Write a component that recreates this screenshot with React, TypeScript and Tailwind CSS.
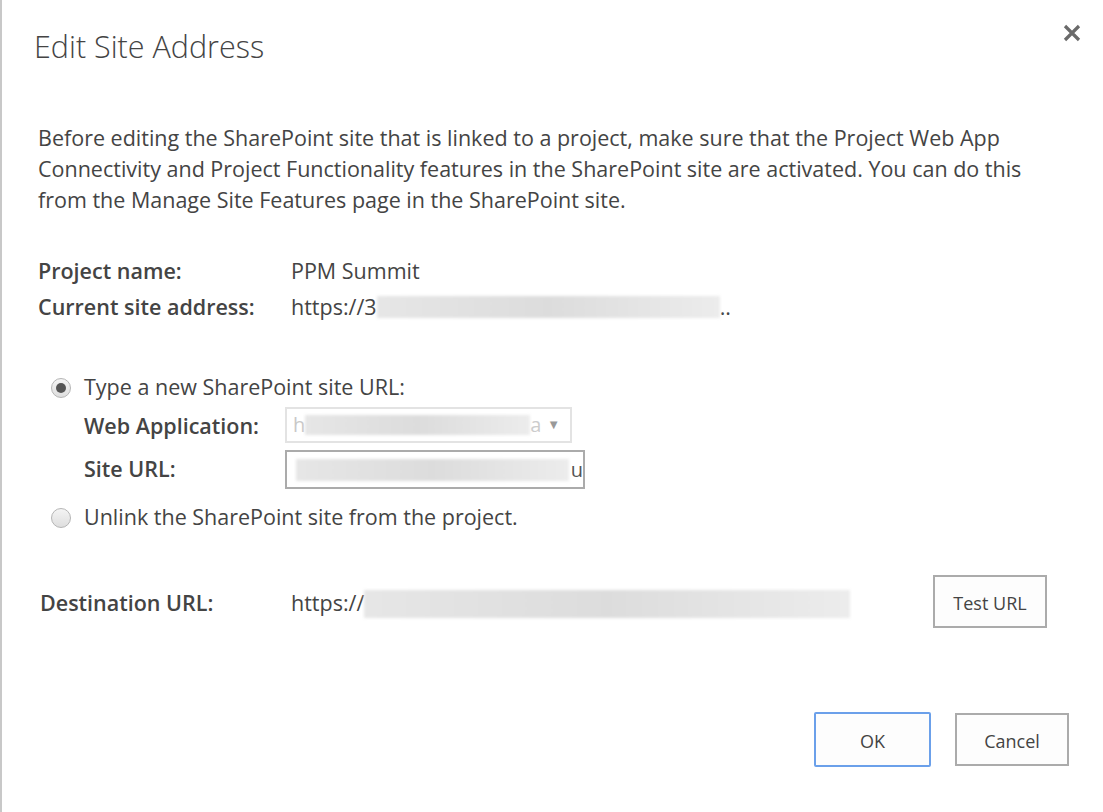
import React from "react";

const font = { fontFamily: '"Open Sans", "Noto Sans", sans-serif' };

function Blur({ w, h = 26, className = "" }: { w: number; h?: number; className?: string }) {
  return (
    <span
      className={"inline-block align-middle bg-gradient-to-r from-[#e6e6e6] via-[#dcdcdc] to-[#ececec] blur-[1.5px] " + className}
      style={{ width: w, height: h }}
    />
  );
}

function Radio({ checked }: { checked?: boolean }) {
  return (
    <span className="flex h-[20px] w-[20px] shrink-0 items-center justify-center rounded-full border border-[#b5b5b5] bg-gradient-to-b from-[#f4f4f4] to-[#dedede]">
      {checked && <span className="h-[10px] w-[10px] rounded-full bg-[#555]" />}
    </span>
  );
}

export default function App() {
  return (
    <div
      className="relative h-[812px] w-[1103px] overflow-hidden border-l-2 border-[#c8c8c8] bg-white pl-[36px] pr-[32px] pt-[26px] text-[#444]"
      style={font}
    >
      <div className="absolute right-[22px] top-[24px] text-[#666]">
        <svg width="18" height="18" viewBox="0 0 18 18">
          <path d="M2 2 L16 16 M16 2 L2 16" stroke="#6a6a6a" strokeWidth="3.2" strokeLinecap="butt" />
        </svg>
      </div>

      <h1 className="-ml-[4px] text-[30.5px] font-light leading-[40px] text-[#444]">Edit Site Address</h1>

      <p className="mt-[56px] whitespace-nowrap text-[21.5px] leading-[31px]">
        Before editing the SharePoint site that is linked to a project, make sure that the Project Web App
        <br />
        Connectivity and Project Functionality features in the SharePoint site are activated. You can do this
        <br />
        from the Manage Site Features page in the SharePoint site.
      </p>

      <div className="mt-[38px] grid grid-cols-[253px_1fr] text-[21.5px] leading-[36px]">
        <div className="font-semibold">Project name:</div>
        <div>PPM Summit</div>
        <div className="whitespace-nowrap font-semibold">Current site address:</div>
        <div className="flex items-center whitespace-nowrap">
          <span>https://3</span>
          <Blur w={343} h={22} />
          <span>..</span>
        </div>
      </div>

      <div className="mt-[47px] pl-[13px] text-[21.5px]">
        <div className="flex h-[31px] items-center gap-[13px]">
          <Radio checked />
          <span>Type a new SharePoint site URL:</span>
        </div>
        <div className="mt-[4px] flex items-center pl-[33px]">
          <div className="w-[201px] pt-[3px] font-semibold">Web Application:</div>
          <div className="flex h-[36px] w-[287px] items-center border-2 border-[#e3e3e3] pl-[6px] text-[20px] text-[#c8c8c8]">
            <span>h</span>
            <Blur w={225} h={20} />
            <span className="text-[#ccc]">a</span>
            <span className="ml-auto mr-[10px] text-[13px] text-[#999]">▼</span>
          </div>
        </div>
        <div className="mt-[7px] flex items-center pl-[33px]">
          <div className="w-[201px] font-semibold">Site URL:</div>
          <div className="flex h-[39px] w-[300px] items-center border-2 border-[#ababab] pl-[9px] text-[20px]">
            <Blur w={274} h={22} />
            <span className="ml-[2px] text-[#555]">u</span>
          </div>
        </div>
        <div className="mt-[13px] flex h-[31px] items-center gap-[13px]">
          <Radio />
          <span>Unlink the SharePoint site from the project.</span>
        </div>
      </div>

      <div className="mt-[42px] flex items-center text-[21.5px]">
        <div className="w-[253px] pl-[2px] pt-[4px] font-semibold">Destination URL:</div>
        <div className="flex items-center pt-[4px]">
          <span>https://</span>
          <Blur w={486} h={28} />
        </div>
        <button className="ml-auto mr-[24px] h-[53px] w-[114px] border-2 border-[#ababab] bg-[#fdfdfd] pt-[4px] text-[18px] text-[#444]">
          Test URL
        </button>
      </div>

      <div className="mt-[84px] flex justify-end gap-[24px] pr-[2px]">
        <button className="h-[55px] w-[117px] rounded-[2px] border-2 border-[#6ba0ea] bg-[#fdfdfd] pt-[4px] text-[18px] text-[#444]">
          OK
        </button>
        <button className="mt-[1px] h-[53px] w-[114px] border-2 border-[#ababab] bg-[#fdfdfd] pt-[4px] text-[18px] text-[#444]">
          Cancel
        </button>
      </div>
    </div>
  );
}
